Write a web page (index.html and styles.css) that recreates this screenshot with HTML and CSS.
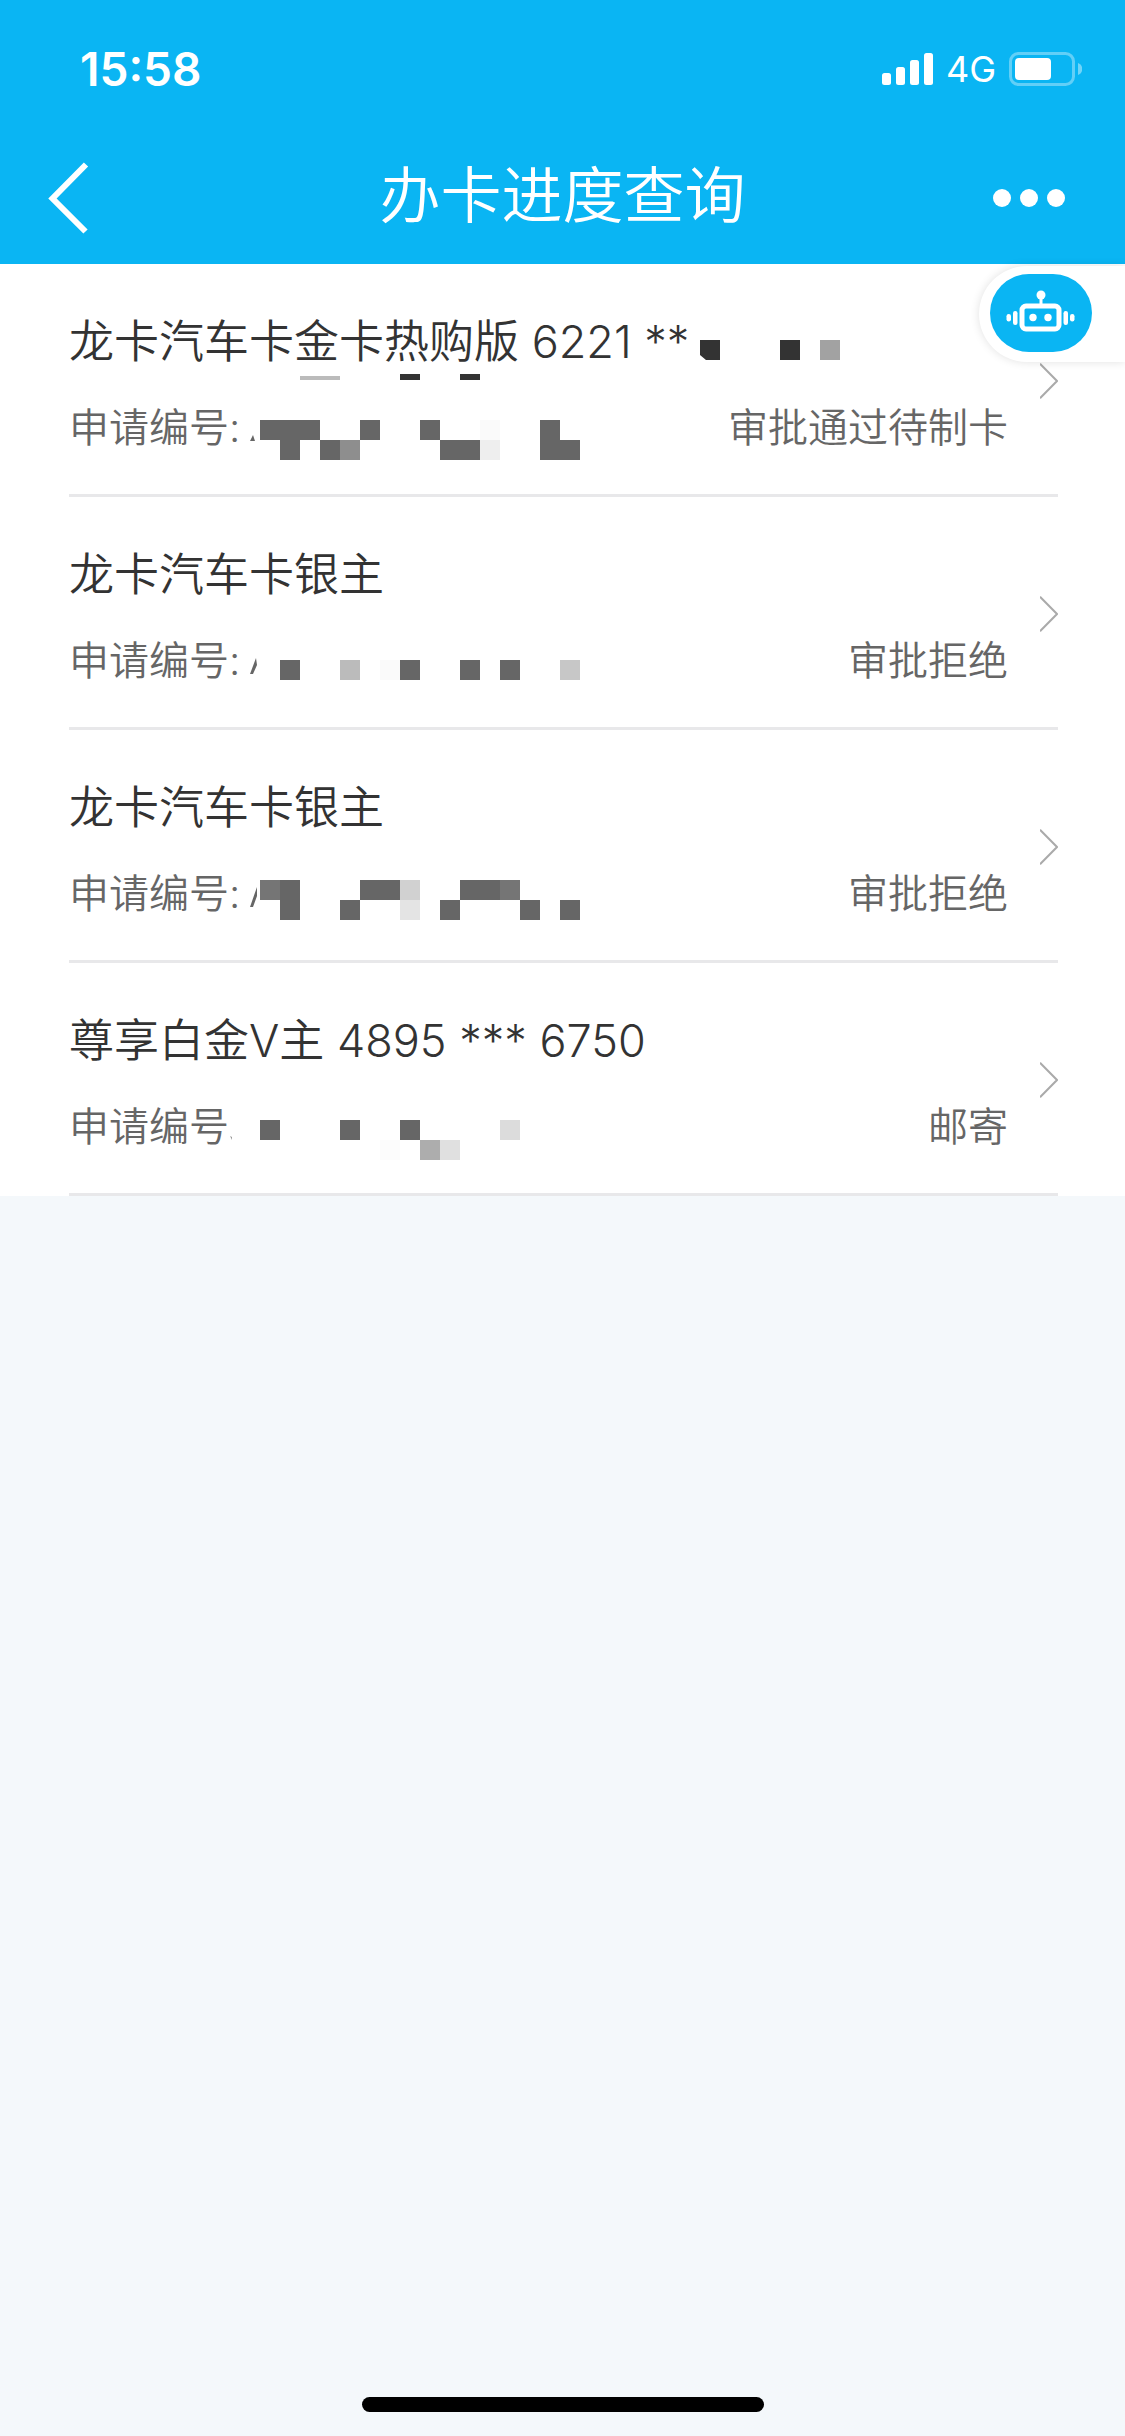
FILE: index.html
```html
<!DOCTYPE html>
<html lang="zh-CN">
<head>
<meta charset="utf-8">
<meta name="viewport" content="width=device-width, initial-scale=1">
<title>办卡进度查询</title>
<link rel="stylesheet" href="styles.css">
</head>
<body>
<div class="screen">
  <header class="top">
    <div class="status-bar">
      <time class="clock">15:58</time>
      <div class="indicators">
        <svg class="signal" width="51" height="32" viewBox="0 0 51 32" fill="#fff" aria-hidden="true">
          <rect x="0" y="20" width="9" height="12" rx="2.5"/>
          <rect x="14" y="14" width="9" height="18" rx="2.5"/>
          <rect x="28" y="7" width="9" height="25" rx="2.5"/>
          <rect x="42" y="0" width="9" height="32" rx="2.5"/>
        </svg>
        <span class="network">4G</span>
        <svg class="battery" width="73" height="34" viewBox="0 0 73 34" aria-hidden="true">
          <rect x="1.5" y="1.5" width="63" height="31" rx="8" fill="none" stroke="#fff" stroke-opacity=".36" stroke-width="3"/>
          <path d="M69 11c2.700 1 4.300 3.300 4.300 6s-1.600 5-4.300 6z" fill="#fff" fill-opacity=".42"/>
          <rect x="6" y="6" width="36" height="22" rx="4" fill="#fff"/>
        </svg>
      </div>
    </div>
    <nav class="nav">
      <button class="nav-button" type="button" aria-label="返回">
        <svg width="41" height="72" viewBox="0 0 41 72" fill="none" stroke="#fff" stroke-width="6" aria-hidden="true"><path d="M38 2.500 4.500 36.500 37.500 69.500"/></svg>
      </button>
      <h1 class="nav-title">办卡进度查询</h1>
      <button class="nav-button nav-more" type="button" aria-label="更多">
        <svg width="72" height="18" viewBox="0 0 72 18" fill="#fff" aria-hidden="true"><circle cx="9" cy="9" r="9"/><circle cx="36" cy="9" r="9"/><circle cx="63" cy="9" r="9"/></svg>
      </button>
    </nav>
  </header>

  <main class="content">
    <ul class="cards">
      <li>
        <a class="card" href="#">
          <span class="card-text">
            <span class="card-name">龙卡汽车卡金卡热购版 6221 **</span>
            <span class="card-meta"><span>申请编号:</span><span>审批通过待制卡</span></span>
          </span>
          <svg class="arrow" width="18" height="36" viewBox="0 0 18 36" aria-hidden="true"><path d="M0 .8 17 18 0 35.200"/></svg>
          <svg class="mask" width="900" height="230" viewBox="0 0 900 230" fill="#666" aria-hidden="true">
            <path fill="#333" d="M700 76h20v20h-14l-6-5zM780 76h20v20h-20zM400 110h20v6h-20zM460 110h20v6h-20z"/>
            <path fill="#a2a2a2" d="M820 76h20v20h-20z"/>
            <path fill="#bbb" d="M300 112h40v4h-40z"/>
            <path d="M250 177l3-6 2 6zM260 156h60v20h-20v20h-20v-20h-20zM360 156h20v20h-20zM320 176h20v20h-20zM420 156h20v20h-20zM440 176h40v20h-40zM540 156h20v20h20v20h-40z"/>
            <path fill="#8e8e8e" d="M340 176h20v20h-20z"/>
            <path fill="#fafafa" d="M480 156h20v20h-20z"/>
            <path fill="#eee" d="M480 176h20v20h-20z"/>
          </svg>
        </a>
      </li>
      <li>
        <a class="card" href="#">
          <span class="card-text">
            <span class="card-name">龙卡汽车卡银主</span>
            <span class="card-meta"><span>申请编号:</span><span>审批拒绝</span></span>
          </span>
          <svg class="arrow" width="18" height="36" viewBox="0 0 18 36" aria-hidden="true"><path d="M0 .8 17 18 0 35.200"/></svg>
          <svg class="mask" width="900" height="230" viewBox="0 0 900 230" fill="#666" aria-hidden="true">
            <path d="M250 177l6-16 1 7-4 9zM280 163h20v20h-20zM400 163h20v20h-20zM460 163h20v20h-20zM500 163h20v20h-20z"/>
            <path fill="#bbb" d="M340 163h20v20h-20z"/>
            <path fill="#fafafa" d="M380 163h20v20h-20z"/>
            <path fill="#c7c7c7" d="M560 163h20v20h-20z"/>
          </svg>
        </a>
      </li>
      <li>
        <a class="card" href="#">
          <span class="card-text">
            <span class="card-name">龙卡汽车卡银主</span>
            <span class="card-meta"><span>申请编号:</span><span>审批拒绝</span></span>
          </span>
          <svg class="arrow" width="18" height="36" viewBox="0 0 18 36" aria-hidden="true"><path d="M0 .8 17 18 0 35.200"/></svg>
          <svg class="mask" width="900" height="230" viewBox="0 0 900 230" fill="#666" aria-hidden="true">
            <path d="M250 177l7-20v9l-4 11zM280 150h20v40h-20zM360 150h40v20h-40zM340 170h20v20h-20zM460 150h40v20h-40zM440 170h20v20h-20zM520 170h20v20h-20zM560 170h20v20h-20z"/>
            <path fill="#757575" d="M260 150h20v20h-20zM500 150h20v20h-20z"/>
            <path fill="#d1d1d1" d="M400 150h20v20h-20z"/>
            <path fill="#e4e4e4" d="M400 170h20v20h-20z"/>
          </svg>
        </a>
      </li>
      <li>
        <a class="card" href="#">
          <span class="card-text">
            <span class="card-name">尊享白金V主 4895 *** 6750</span>
            <span class="card-meta"><span>申请编号</span><span>邮寄</span></span>
          </span>
          <svg class="arrow" width="18" height="36" viewBox="0 0 18 36" aria-hidden="true"><path d="M0 .8 17 18 0 35.200"/></svg>
          <svg class="mask" width="900" height="230" viewBox="0 0 900 230" fill="#666" aria-hidden="true">
            <path d="M260 157h20v20h-20zM340 157h20v20h-20zM400 157h20v20h-20z"/>
            <path fill="#999" d="M230 173l2 1v3z"/>
            <path fill="#dcdcdc" d="M500 157h20v20h-20z"/>
            <path fill="#fcfcfc" d="M380 177h20v20h-20z"/>
            <path fill="#adadad" d="M420 177h20v20h-20z"/>
            <path fill="#e0e0e0" d="M440 177h20v20h-20z"/>
          </svg>
        </a>
      </li>
    </ul>

    <div class="assistant">
      <button class="assistant-button" type="button" aria-label="智能客服">
        <svg width="70" height="46" viewBox="0 0 70 46" aria-hidden="true">
          <rect x="16" y="16" width="37" height="23" rx="4" fill="none" stroke="#fff" stroke-width="5"/>
          <path d="M35 15V7" stroke="#fff" stroke-width="3"/>
          <g fill="#fff">
            <circle cx="35" cy="5" r="4.500"/><circle cx="27" cy="27.500" r="3.700"/><circle cx="42" cy="27.500" r="3.700"/>
            <rect x="7" y="21" width="4.500" height="14" rx="2.200"/><rect x="0.500" y="24" width="4.500" height="7.500" rx="2.200"/>
            <rect x="57.500" y="21" width="4.500" height="14" rx="2.200"/><rect x="64" y="24" width="4.500" height="7.500" rx="2.200"/>
          </g>
        </svg>
      </button>
    </div>
  </main>

  <footer class="home"><span class="home-bar"></span></footer>
</div>
</body>
</html>
```
FILE: styles.css
```css
* {
  box-sizing: border-box;
}

body {
  margin: 0;
  background: #f4f8fb;
  color: #333;
  font-family: Inter, "Noto Sans CJK SC", sans-serif;
  font-weight: 350;
}

button {
  padding: 0;
  border: 0;
  background: none;
  font: inherit;
  cursor: pointer;
}

svg {
  display: block;
}

.screen {
  display: flex;
  flex-direction: column;
  min-height: 100vh;
}

/* header */
.top {
  background: #0ab5f3;
  color: #fff;
}

.status-bar {
  display: flex;
  align-items: center;
  justify-content: space-between;
  height: 138px;
  padding: 0 43px 0 80px;
}

.clock {
  font-size: 46px;
  font-weight: 600;
  line-height: 60px;
}

.indicators {
  display: flex;
  align-items: center;
  gap: 13px;
}

.network {
  font-size: 36px;
  font-weight: 400;
  line-height: 40px;
}

.nav {
  display: grid;
  grid-template-columns: 1fr auto 1fr;
  align-items: center;
  height: 126px;
  padding: 0 48px 6px;
}

.nav-button {
  justify-self: start;
}

.nav-more {
  justify-self: end;
  margin-right: 12px;
}

.nav-title {
  margin: 0;
  padding-bottom: 4px;
  font-size: 61px;
  font-weight: 350;
  line-height: 72px;
}

/* application list */
.content {
  position: relative;
  flex: 1;
}

.cards {
  margin: 0;
  padding: 0;
  list-style: none;
  background: #fff;
}

.card {
  position: relative;
  display: flex;
  align-items: center;
  gap: 32px;
  padding: 0 67px 0 69px;
  color: inherit;
  text-decoration: none;
}

.card::after {
  content: "";
  position: absolute;
  right: 67px;
  bottom: 0;
  left: 69px;
  height: 3px;
  background: #e8e8ea;
}

.card-text {
  display: grid;
  flex: 1;
  gap: 26px;
  padding: 48px 0 39px;
}

.card-name {
  font-size: 45px;
  line-height: 60px;
}

.card-meta {
  display: flex;
  justify-content: space-between;
  color: #666;
  font-size: 40px;
  line-height: 60px;
}

.arrow {
  fill: none;
  stroke: #aaa;
  stroke-width: 2;
}

.mask {
  position: absolute;
  top: 0;
  left: 0;
}

/* floating assistant tab */
.assistant {
  position: absolute;
  top: 2px;
  right: 0;
  padding: 8px 33px 10px 11px;
  border-radius: 48px 0 0 48px;
  background: #fff;
  box-shadow: 0 0 10px rgba(0, 0, 0, 0.12);
}

.assistant-button {
  display: grid;
  place-items: center;
  width: 102px;
  height: 78px;
  border-radius: 39px;
  background: #0ab5f3;
}

/* home indicator */
.home {
  display: flex;
  justify-content: center;
  padding: 12px 0 24px;
}

.home-bar {
  width: 402px;
  height: 15px;
  border-radius: 8px;
  background: #000;
}
```
